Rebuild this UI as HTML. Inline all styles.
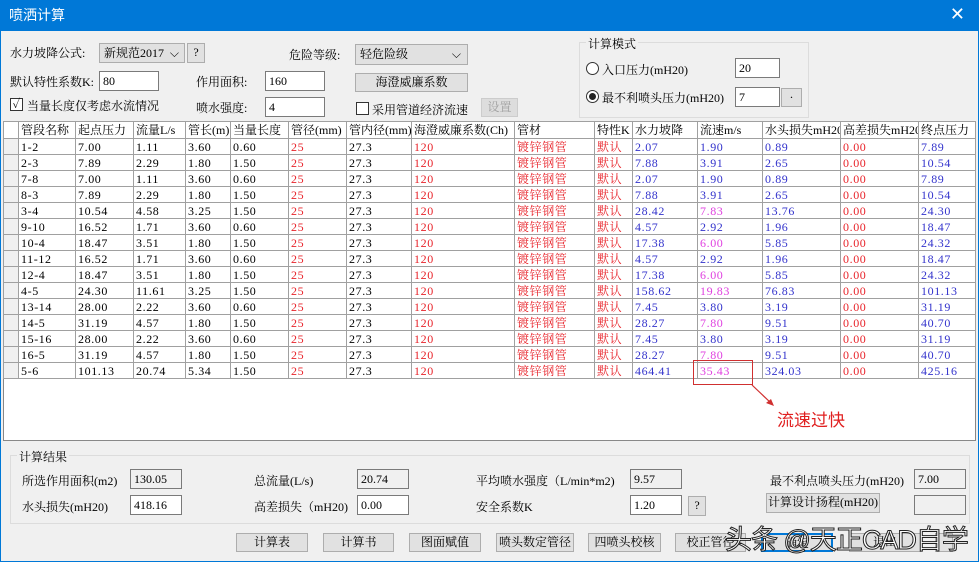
<!DOCTYPE html><html><head><meta charset="utf-8"><style>
*{box-sizing:border-box;margin:0;padding:0}
body{width:979px;height:562px;overflow:hidden;background:#f0f0f0;font-family:"Liberation Serif","Noto Serif CJK SC",serif;font-size:12px;color:#000;position:relative}
.a{position:absolute;white-space:nowrap}
.title{left:0;top:0;width:979px;height:31px;background:#0078d7;color:#fff;font-family:"Liberation Sans","Noto Sans CJK SC",sans-serif;font-size:14px;line-height:31px;padding-left:9px}
.inp{position:absolute;background:#fff;border:1px solid #7a7a7a;height:20px;line-height:18px;padding-left:3px}
.ro{position:absolute;background:#f0f0f0;border:1px solid #7a7a7a;height:20px;line-height:18px;padding-left:3px}
.btn{position:absolute;background:#e1e1e1;border:1px solid #adadad;height:19px;line-height:17px;text-align:center}
.cb{position:absolute;width:13px;height:13px;border:1px solid #333;background:#fff}
table{position:absolute;left:3px;top:121px;width:972px;border-collapse:collapse;background:#fff;table-layout:fixed}
td{border:1px solid #a0a0a0;height:16px;line-height:14px;padding:0;text-indent:2px;font-size:12px;overflow:hidden;white-space:nowrap;letter-spacing:0.6px}
tr.h td{height:17px;background:#fff;letter-spacing:0}
td.s{background:#f0f0f0}
.r{color:#e8232a}.b{color:#3333cc}.m{color:#e040e0}
</style></head><body>
<div class="a title">喷洒计算</div>
<div class="a" style="right:14px;top:4px;color:#fff;font-size:18px;font-family:'DejaVu Sans',sans-serif">✕</div>
<div class="a" style="left:0;top:31px;width:1px;height:531px;background:#0078d7"></div>
<div class="a" style="right:0;top:31px;width:1px;height:531px;background:#0078d7"></div>
<div class="a" style="left:0;bottom:0;width:979px;height:1px;background:#0078d7"></div>

<div class="a" style="left:10px;top:44px">水力坡降公式:</div>
<div class="btn" style="left:99px;top:43px;width:86px;height:20px;text-align:left;padding-left:4px;line-height:18px">新规范2017 <span style="position:absolute;right:5px;font-family:'DejaVu Sans'">⌵</span></div>
<div class="btn" style="left:187px;top:43px;width:18px;height:20px">?</div>
<div class="a" style="left:289px;top:46px">危险等级:</div>
<div class="btn" style="left:355px;top:44px;width:113px;height:21px;text-align:left;padding-left:4px;line-height:19px">轻危险级<span style="position:absolute;right:6px;font-family:'DejaVu Sans'">⌵</span></div>
<div class="a" style="left:10px;top:73px">默认特性系数K:</div>
<div class="inp" style="left:99px;top:71px;width:60px">80</div>
<div class="a" style="left:196px;top:73px">作用面积:</div>
<div class="inp" style="left:265px;top:71px;width:60px">160</div>
<div class="btn" style="left:355px;top:73px;width:113px;height:19px">海澄威廉系数</div>
<div class="cb" style="left:10px;top:98px;font-size:12px;line-height:11px;text-align:center">✓</div>
<div class="a" style="left:27px;top:97px">当量长度仅考虑水流情况</div>
<div class="a" style="left:196px;top:99px">喷水强度:</div>
<div class="inp" style="left:265px;top:97px;width:60px">4</div>
<div class="cb" style="left:356px;top:102px"></div>
<div class="a" style="left:372px;top:101px">采用管道经济流速</div>
<div class="btn" style="left:481px;top:98px;width:37px;height:19px;color:#a0a0a0;border-color:#ccc;background:#ddd">设置</div>

<div class="a" style="left:579px;top:42px;width:230px;height:76px;border:1px solid #dcdcdc"></div>
<div class="a" style="left:586px;top:35px;background:#f0f0f0;padding:0 2px">计算模式</div>
<div class="a" style="left:586px;top:62px;width:13px;height:13px;border:1px solid #333;border-radius:50%;background:#fff"></div>
<div class="a" style="left:602px;top:61px">入口压力(mH20)</div>
<div class="inp" style="left:735px;top:58px;width:45px">20</div>
<div class="a" style="left:586px;top:90px;width:13px;height:13px;border:1px solid #333;border-radius:50%;background:#fff"><div style="margin:2px;width:7px;height:7px;border-radius:50%;background:#222"></div></div>
<div class="a" style="left:602px;top:89px">最不利喷头压力(mH20)</div>
<div class="inp" style="left:735px;top:87px;width:45px">7</div>
<div class="btn" style="left:781px;top:88px;width:21px;height:19px">·</div>

<div class="a" style="left:3px;top:121px;width:973px;height:320px;background:#fff;border:1px solid #888"></div>
<table>
<colgroup><col style="width:15px"><col style="width:57px"><col style="width:58px"><col style="width:52px"><col style="width:45px"><col style="width:58px"><col style="width:58px"><col style="width:65px"><col style="width:103px"><col style="width:80px"><col style="width:38px"><col style="width:65px"><col style="width:65px"><col style="width:78px"><col style="width:78px"><col style="width:57px"></colgroup>
<tr class="h"><td class="s"></td><td>管段名称</td><td>起点压力</td><td>流量L/s</td><td>管长(m)</td><td>当量长度</td><td>管径(mm)</td><td>管内径(mm)</td><td>海澄威廉系数(Ch)</td><td>管材</td><td>特性K</td><td>水力坡降</td><td>流速m/s</td><td>水头损失mH20</td><td>高差损失mH20</td><td>终点压力</td></tr>
<tr><td class="s"></td><td>1-2</td><td>7.00</td><td>1.11</td><td>3.60</td><td>0.60</td><td class="r">25</td><td>27.3</td><td class="r">120</td><td class="r">镀锌钢管</td><td class="r">默认</td><td class="b">2.07</td><td class="b">1.90</td><td class="b">0.89</td><td class="r">0.00</td><td class="b">7.89</td></tr>
<tr><td class="s"></td><td>2-3</td><td>7.89</td><td>2.29</td><td>1.80</td><td>1.50</td><td class="r">25</td><td>27.3</td><td class="r">120</td><td class="r">镀锌钢管</td><td class="r">默认</td><td class="b">7.88</td><td class="b">3.91</td><td class="b">2.65</td><td class="r">0.00</td><td class="b">10.54</td></tr>
<tr><td class="s"></td><td>7-8</td><td>7.00</td><td>1.11</td><td>3.60</td><td>0.60</td><td class="r">25</td><td>27.3</td><td class="r">120</td><td class="r">镀锌钢管</td><td class="r">默认</td><td class="b">2.07</td><td class="b">1.90</td><td class="b">0.89</td><td class="r">0.00</td><td class="b">7.89</td></tr>
<tr><td class="s"></td><td>8-3</td><td>7.89</td><td>2.29</td><td>1.80</td><td>1.50</td><td class="r">25</td><td>27.3</td><td class="r">120</td><td class="r">镀锌钢管</td><td class="r">默认</td><td class="b">7.88</td><td class="b">3.91</td><td class="b">2.65</td><td class="r">0.00</td><td class="b">10.54</td></tr>
<tr><td class="s"></td><td>3-4</td><td>10.54</td><td>4.58</td><td>3.25</td><td>1.50</td><td class="r">25</td><td>27.3</td><td class="r">120</td><td class="r">镀锌钢管</td><td class="r">默认</td><td class="b">28.42</td><td class="m">7.83</td><td class="b">13.76</td><td class="r">0.00</td><td class="b">24.30</td></tr>
<tr><td class="s"></td><td>9-10</td><td>16.52</td><td>1.71</td><td>3.60</td><td>0.60</td><td class="r">25</td><td>27.3</td><td class="r">120</td><td class="r">镀锌钢管</td><td class="r">默认</td><td class="b">4.57</td><td class="b">2.92</td><td class="b">1.96</td><td class="r">0.00</td><td class="b">18.47</td></tr>
<tr><td class="s"></td><td>10-4</td><td>18.47</td><td>3.51</td><td>1.80</td><td>1.50</td><td class="r">25</td><td>27.3</td><td class="r">120</td><td class="r">镀锌钢管</td><td class="r">默认</td><td class="b">17.38</td><td class="m">6.00</td><td class="b">5.85</td><td class="r">0.00</td><td class="b">24.32</td></tr>
<tr><td class="s"></td><td>11-12</td><td>16.52</td><td>1.71</td><td>3.60</td><td>0.60</td><td class="r">25</td><td>27.3</td><td class="r">120</td><td class="r">镀锌钢管</td><td class="r">默认</td><td class="b">4.57</td><td class="b">2.92</td><td class="b">1.96</td><td class="r">0.00</td><td class="b">18.47</td></tr>
<tr><td class="s"></td><td>12-4</td><td>18.47</td><td>3.51</td><td>1.80</td><td>1.50</td><td class="r">25</td><td>27.3</td><td class="r">120</td><td class="r">镀锌钢管</td><td class="r">默认</td><td class="b">17.38</td><td class="m">6.00</td><td class="b">5.85</td><td class="r">0.00</td><td class="b">24.32</td></tr>
<tr><td class="s"></td><td>4-5</td><td>24.30</td><td>11.61</td><td>3.25</td><td>1.50</td><td class="r">25</td><td>27.3</td><td class="r">120</td><td class="r">镀锌钢管</td><td class="r">默认</td><td class="b">158.62</td><td class="m">19.83</td><td class="b">76.83</td><td class="r">0.00</td><td class="b">101.13</td></tr>
<tr><td class="s"></td><td>13-14</td><td>28.00</td><td>2.22</td><td>3.60</td><td>0.60</td><td class="r">25</td><td>27.3</td><td class="r">120</td><td class="r">镀锌钢管</td><td class="r">默认</td><td class="b">7.45</td><td class="b">3.80</td><td class="b">3.19</td><td class="r">0.00</td><td class="b">31.19</td></tr>
<tr><td class="s"></td><td>14-5</td><td>31.19</td><td>4.57</td><td>1.80</td><td>1.50</td><td class="r">25</td><td>27.3</td><td class="r">120</td><td class="r">镀锌钢管</td><td class="r">默认</td><td class="b">28.27</td><td class="m">7.80</td><td class="b">9.51</td><td class="r">0.00</td><td class="b">40.70</td></tr>
<tr><td class="s"></td><td>15-16</td><td>28.00</td><td>2.22</td><td>3.60</td><td>0.60</td><td class="r">25</td><td>27.3</td><td class="r">120</td><td class="r">镀锌钢管</td><td class="r">默认</td><td class="b">7.45</td><td class="b">3.80</td><td class="b">3.19</td><td class="r">0.00</td><td class="b">31.19</td></tr>
<tr><td class="s"></td><td>16-5</td><td>31.19</td><td>4.57</td><td>1.80</td><td>1.50</td><td class="r">25</td><td>27.3</td><td class="r">120</td><td class="r">镀锌钢管</td><td class="r">默认</td><td class="b">28.27</td><td class="m">7.80</td><td class="b">9.51</td><td class="r">0.00</td><td class="b">40.70</td></tr>
<tr><td class="s"></td><td>5-6</td><td>101.13</td><td>20.74</td><td>5.34</td><td>1.50</td><td class="r">25</td><td>27.3</td><td class="r">120</td><td class="r">镀锌钢管</td><td class="r">默认</td><td class="b">464.41</td><td class="m">35.43</td><td class="b">324.03</td><td class="r">0.00</td><td class="b">425.16</td></tr>
</table>
<div class="a" style="left:693px;top:360px;width:60px;height:25px;border:1px solid #d03030"></div>
<svg class="a" style="left:750px;top:383px" width="30" height="30"><line x1="2" y1="2" x2="22" y2="21" stroke="#d03030" stroke-width="1.2"/><path d="M24 23 L16 20 L21 16 Z" fill="#d03030"/></svg>
<div class="a" style="left:777px;top:406px;color:#e02020;font-size:17px;font-family:'Liberation Sans','Noto Sans CJK SC',sans-serif">流速过快</div>

<div class="a" style="left:10px;top:455px;width:960px;height:69px;border:1px solid #dcdcdc"></div>
<div class="a" style="left:17px;top:448px;background:#f0f0f0;padding:0 2px">计算结果</div>
<div class="a" style="left:22px;top:472px">所选作用面积(m2)</div>
<div class="ro" style="left:130px;top:469px;width:52px">130.05</div>
<div class="a" style="left:22px;top:498px">水头损失(mH20)</div>
<div class="inp" style="left:130px;top:495px;width:52px">418.16</div>
<div class="a" style="left:254px;top:472px">总流量(L/s)</div>
<div class="ro" style="left:357px;top:469px;width:52px">20.74</div>
<div class="a" style="left:254px;top:498px">高差损失（mH20)</div>
<div class="inp" style="left:357px;top:495px;width:52px">0.00</div>
<div class="a" style="left:476px;top:472px">平均喷水强度（L/min*m2)</div>
<div class="ro" style="left:630px;top:469px;width:52px">9.57</div>
<div class="a" style="left:476px;top:498px">安全系数K</div>
<div class="inp" style="left:630px;top:495px;width:52px">1.20</div>
<div class="btn" style="left:688px;top:496px;width:18px;height:20px">?</div>
<div class="a" style="left:770px;top:472px">最不利点喷头压力(mH20)</div>
<div class="ro" style="left:914px;top:469px;width:52px">7.00</div>
<div class="btn" style="left:766px;top:493px;width:114px;height:20px">计算设计扬程(mH20)</div>
<div class="ro" style="left:914px;top:495px;width:52px"></div>

<div class="btn" style="left:236px;top:533px;width:72px">计算表</div>
<div class="btn" style="left:323px;top:533px;width:71px">计算书</div>
<div class="btn" style="left:409px;top:533px;width:72px">图面赋值</div>
<div class="btn" style="left:496px;top:533px;width:78px">喷头数定管径</div>
<div class="btn" style="left:588px;top:533px;width:73px">四喷头校核</div>
<div class="btn" style="left:675px;top:533px;width:71px">校正管径</div>
<div class="btn" style="left:761px;top:533px;width:72px;border:2px solid #0078d7">确定</div>
<div class="btn" style="left:849px;top:533px;width:72px">退出</div>
<div class="btn" style="left:935px;top:533px;width:18px"></div>
<div class="a" style="left:725px;top:518px;font-size:27px;color:#fff;font-family:'Liberation Sans','Noto Sans CJK SC',sans-serif;-webkit-text-stroke:1px #222;letter-spacing:-1px">头条 @天正CAD自学</div>
</body></html>
